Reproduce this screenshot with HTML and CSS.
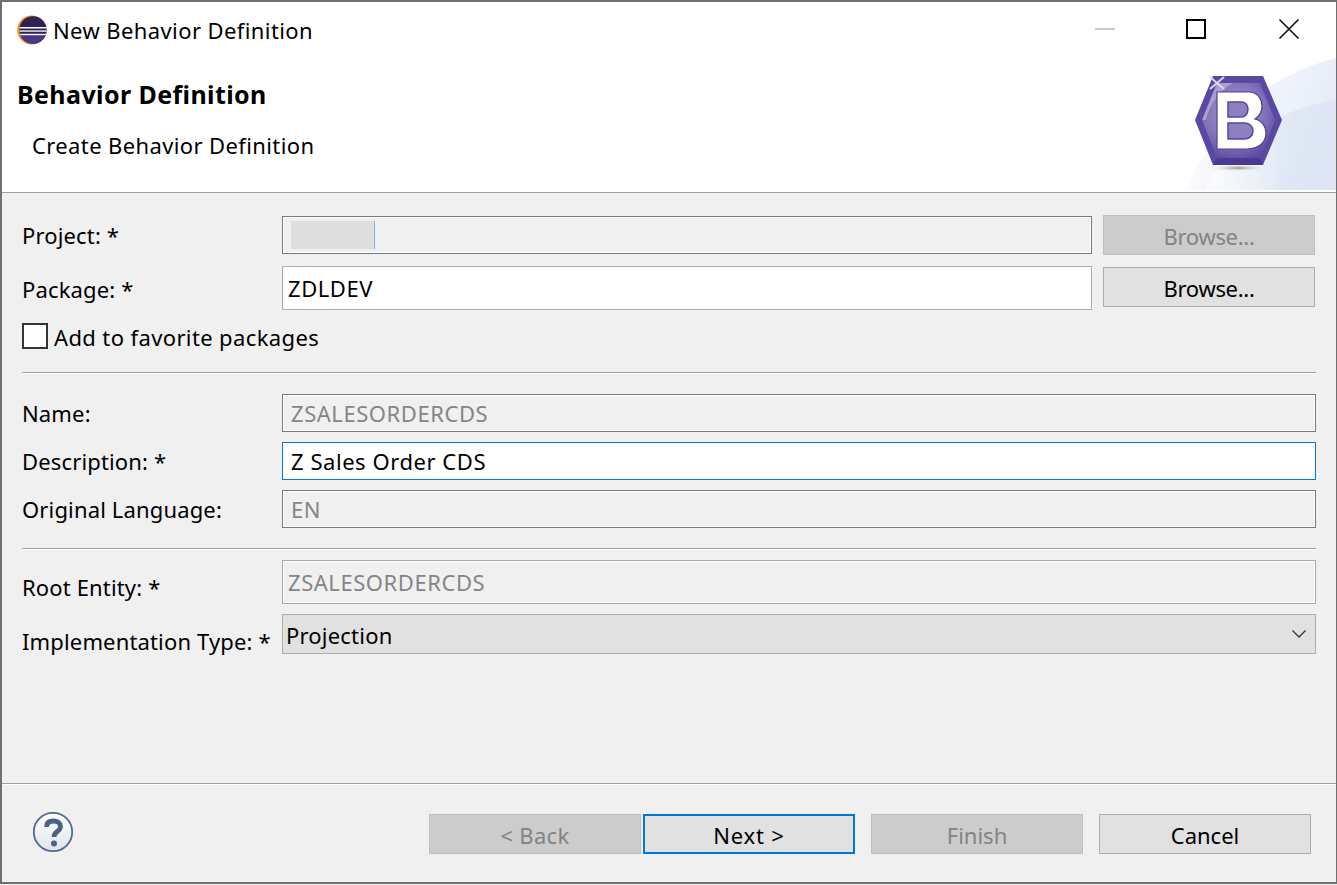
FILE: index.html
```html
<!DOCTYPE html>
<html lang="en">
<head>
    <meta charset="UTF-8">
    <meta name="viewport" content="width=device-width, initial-scale=1.0">
    <title>New Behavior Definition</title>
    <link rel="stylesheet" href="styles.css">
</head>
<body>
    <div class="window">
        <div class="titlebar">
            <svg class="app-icon" width="30" height="30" viewBox="0 0 30 30">
                <defs>
                    <clipPath id="disc"><circle cx="16" cy="15" r="13.7"/></clipPath>
                </defs>
                <circle cx="14.6" cy="15" r="14.4" fill="#f7941e"/>
                <circle cx="16" cy="15" r="13.7" fill="#2c2255"/>
                <g clip-path="url(#disc)">
                    <rect x="0" y="20" width="30" height="9" fill="#473788"/>
                    <rect x="0" y="12" width="30" height="1.500" fill="#fff"/>
                    <rect x="0" y="15.400" width="30" height="1.300" fill="#fff"/>
                    <rect x="0" y="18.800" width="30" height="1.400" fill="#fff"/>
                </g>
            </svg>
            <span class="window-title">New Behavior Definition</span>
            <div class="controls">
                <svg class="control control-min" width="22" height="22" viewBox="0 0 22 22"><path d="M1 11h20" stroke="#c8c8c8" stroke-width="2"/></svg>
                <svg class="control" width="22" height="22" viewBox="0 0 22 22"><rect x="2" y="2" width="18" height="18" fill="none" stroke="#000" stroke-width="2"/></svg>
                <svg class="control" width="22" height="22" viewBox="0 0 22 22"><path d="M1.500 1.500l19 19M20.500 1.500l-19 19" stroke="#111" stroke-width="1.600" fill="none"/></svg>
            </div>
        </div>

        <div class="banner">
            <div class="banner-text">
                <h1 class="banner-title">Behavior Definition</h1>
                <p class="banner-sub">Create Behavior Definition</p>
            </div>
            <svg class="banner-art" width="149" height="134" viewBox="0 0 149 134">
                <defs>
                    <linearGradient id="wash" x1="0" y1="0" x2="1" y2="0.3">
                        <stop offset="0" stop-color="#fff"/>
                        <stop offset="1" stop-color="#e6ecf8"/>
                    </linearGradient>
                    <linearGradient id="wash2" x1="0" y1="0" x2="1" y2="0">
                        <stop offset="0" stop-color="#fff"/>
                        <stop offset="0.65" stop-color="#dbe4f4"/>
                    </linearGradient>
                    <radialGradient id="gem" cx="0.45" cy="0.4" r="0.65">
                        <stop offset="0" stop-color="#a79ad0"/>
                        <stop offset="0.65" stop-color="#8171b8"/>
                        <stop offset="1" stop-color="#5b4aa0"/>
                    </radialGradient>
                    <radialGradient id="shade" cx="0.5" cy="0.5" r="0.5">
                        <stop offset="0" stop-color="#8d8d8d"/>
                        <stop offset="1" stop-color="#fff" stop-opacity="0"/>
                    </radialGradient>
                </defs>
                <path d="M0 134C22 76 70 22 149 2V134Z" fill="url(#wash)"/>
                <path d="M18 134C40 88 85 54 149 44V134Z" fill="url(#wash2)" opacity="0.7"/>
                <ellipse cx="51" cy="112" rx="30" ry="3.500" fill="url(#shade)"/>
                <path d="M26 20H76L95 64L76 109H26L8 64Z" fill="#5a48a3"/>
                <path d="M30 27H73L88 64L73 102H30L15 64Z" fill="url(#gem)"/>
                <path d="M30 102H73L76 109H26Z" fill="#4a3a92"/>
                <path d="M15 64L30 27H46C32 35 22 49 19 64Z" fill="#c8c2e2" opacity="0.55"/>
                <path d="M30 36H62C71 36 75 44 75 50C75 57 71 61 68 63C74 64 79 70 79 77C79 87 71 93 60 93H30Z" fill="#fff" stroke="#4f3f98" stroke-width="1.200"/>
                <path d="M41 46H55C59 46 61 50 61 53C61 58 58 61 54 61H41Z" fill="#8d7fc0" stroke="#5546a0" stroke-width="1.500"/>
                <path d="M41 67H58C63 67 66 71 66 75C66 80 62 83 57 83H41Z" fill="#8d7fc0" stroke="#5546a0" stroke-width="1.500"/>
                <path d="M23 21L37 33M37 21L23 33" stroke="#dcd8ea" stroke-width="2"/>
            </svg>
        </div>

        <div class="form">
            <div class="row row-project">
                <label class="label">Project: *</label>
                <div class="field field-readonly">
                    <span class="redacted"></span>
                </div>
                <button class="btn btn-browse" disabled>Browse...</button>
            </div>
            <div class="row row-package">
                <label class="label label-nudge">Package: *</label>
                <div class="field field-white field-tight">ZDLDEV</div>
                <button class="btn btn-browse btn-raised">Browse...</button>
            </div>
            <div class="check-row">
                <span class="checkbox"></span>
                <span class="check-text">Add to favorite packages</span>
            </div>
            <div class="separator sep-first"></div>
            <div class="row row-text">
                <label class="label">Name:</label>
                <div class="field field-readonly field-muted">ZSALESORDERCDS</div>
            </div>
            <div class="row row-text">
                <label class="label">Description: *</label>
                <div class="field field-focus">Z Sales Order CDS</div>
            </div>
            <div class="row row-text">
                <label class="label">Original Language:</label>
                <div class="field field-readonly field-muted">EN</div>
            </div>
            <div class="separator sep-second"></div>
            <div class="row row-root">
                <label class="label label-low">Root Entity: *</label>
                <div class="field field-pale field-muted field-tight">ZSALESORDERCDS</div>
            </div>
            <div class="row row-impl">
                <label class="label label-low">Implementation Type: *</label>
                <div class="combo">
                    <span class="combo-text">Projection</span>
                    <svg width="16" height="10" viewBox="0 0 16 10"><path d="M1.500 1.500L8 8l6.500-6.500" fill="none" stroke="#333" stroke-width="1.300"/></svg>
                </div>
            </div>
        </div>

        <div class="footer">
            <svg class="help" width="42" height="42" viewBox="0 0 42 42">
                <defs>
                    <linearGradient id="helpfill" x1="0" y1="0" x2="0" y2="1">
                        <stop offset="0" stop-color="#fff"/>
                        <stop offset="1" stop-color="#dfe3ea"/>
                    </linearGradient>
                </defs>
                <circle cx="21" cy="21" r="19.200" fill="url(#helpfill)" stroke="#4f6a8f" stroke-width="1.800"/>
                <path d="M14.500 16C14.500 11.500 17.500 10 21.500 10C25.500 10 28.500 12 28.500 15.500C28.500 20.500 22 20.500 22 26" fill="none" stroke="#4a6285" stroke-width="4.800"/>
                <circle cx="22" cy="32.500" r="3" fill="#4a6285"/>
            </svg>
            <div class="footer-buttons">
                <button class="btn btn-wizard btn-back" disabled>&lt; Back</button>
                <button class="btn btn-wizard btn-default">Next &gt;</button>
                <button class="btn btn-wizard btn-after" disabled>Finish</button>
                <button class="btn btn-wizard btn-after">Cancel</button>
            </div>
        </div>
    </div>
</body>
</html>
```
FILE: styles.css
```css
* {
    box-sizing: border-box;
}
body {
    margin: 0;
    padding: 0;
    background-color: #f0f0f0;
    color: #000;
    font-family: "Noto Sans", "Open Sans", sans-serif;
    font-size: 22px;
    line-height: 30px;
    overflow: hidden;
}
.window {
    width: 1337px;
    height: 884px;
    display: flex;
    flex-direction: column;
    background-color: #f0f0f0;
    border: 2px solid #707070;
    border-right-width: 1px;
}

/* title bar */
.titlebar {
    height: 55px;
    flex: none;
    display: flex;
    align-items: center;
    padding-left: 15px;
    background-color: #fff;
}
.window-title {
    margin-left: 6px;
    letter-spacing: 0.4px;
}
.controls {
    margin-left: auto;
    display: flex;
    gap: 71px;
    margin-right: 36px;
    margin-bottom: 2px;
}
.control-min {
    margin: 0 -2px 0 2px;
}

/* banner */
.banner {
    height: 136px;
    flex: none;
    display: flex;
    justify-content: space-between;
    align-items: flex-end;
    background-color: #fff;
    border-bottom: 1px solid #a0a0a0;
}
.banner-text {
    align-self: flex-start;
    padding-left: 15px;
}
.banner-title {
    margin: 20px 0 0;
    font-size: 25px;
    line-height: 34px;
    font-weight: 700;
    letter-spacing: 0.4px;
}
.banner-sub {
    margin: 19px 0 0 15px;
    letter-spacing: 0.38px;
}
.banner-art {
    flex: none;
    margin-bottom: 2px;
}

/* form */
.form {
    flex: 1;
    padding: 22px 20px 0;
}
.row {
    display: flex;
    align-items: center;
}
.label {
    width: 260px;
    flex: none;
    white-space: nowrap;
    letter-spacing: 0.15px;
}
.label-nudge {
    padding-top: 2px;
}
.field {
    flex: 1;
    height: 38px;
    display: flex;
    align-items: center;
    padding: 0 8px;
    border: 1px solid #7a7a7a;
    background-color: #f0f0f0;
    letter-spacing: 0.55px;
}
.row-project {
    height: 40px;
}
.row-package {
    height: 44px;
    margin-top: 11px;
}
.row-text {
    height: 38px;
    margin-top: 10px;
}
.row-text:first-of-type {
    margin-top: 0;
}
.row-root {
    height: 44px;
}
.row-impl {
    height: 40px;
    margin-top: 10px;
}
.label-low {
    padding-top: 14px;
}
.row-root .label-low {
    padding-top: 10px;
}
.row-package .field,
.row-root .field {
    height: 44px;
}
.field-readonly {
    box-shadow: inset 0 0 0 1px #fff;
}
.field-white {
    background-color: #fff;
    border-color: #adadad;
}
.field-tight {
    padding-left: 5px;
}
.field-focus {
    background-color: #fff;
    border-color: #0078d7;
}
.field-pale {
    border-color: #a8a8a8;
    box-shadow: inset 0 0 0 1px #fff;
}
.field-muted {
    color: #858585;
}
.redacted {
    width: 84px;
    height: 28px;
    background-color: #dedede;
    border-right: 1px solid #7fb4e6;
}
.btn {
    font-family: inherit;
    font-size: inherit;
    line-height: 30px;
    color: #000;
    background-color: #e1e1e1;
    border: 1px solid #adadad;
    padding: 2px 0 0;
    height: 40px;
}
.btn:disabled {
    background-color: #cccccc;
    border-color: #bfbfbf;
    color: #838383;
}
.btn-browse {
    width: 212px;
    flex: none;
    margin-left: 11px;
    margin-right: 1px;
    letter-spacing: -0.3px;
}
.btn-raised {
    margin-bottom: 2px;
}
.check-row {
    display: flex;
    align-items: center;
    gap: 6px;
    height: 26px;
    margin-top: 13px;
}
.check-text {
    padding-top: 2px;
    letter-spacing: 0.38px;
}
.checkbox {
    width: 26px;
    height: 26px;
    background-color: #fff;
    border: 2px solid #333;
}
.separator {
    border-top: 1px solid #a0a0a0;
    border-bottom: 1px solid #fff;
    height: 2px;
}
.sep-first {
    margin: 23px 0 20px;
}
.sep-second {
    margin: 20px 0 10px;
}
.combo {
    flex: 1;
    height: 40px;
    display: flex;
    align-items: center;
    justify-content: space-between;
    padding: 0 8px 0 3px;
    background-color: #e1e1e1;
    border: 1px solid #adadad;
}
.combo-text {
    padding-top: 2px;
    letter-spacing: 0.2px;
}

/* footer */
.footer {
    height: 99px;
    flex: none;
    display: flex;
    align-items: flex-start;
    justify-content: space-between;
    border-top: 1px solid #a0a0a0;
    box-shadow: inset 0 1px 0 #fff;
    padding: 30px 25px 0 30px;
}
.help {
    margin-top: -3px;
}
.footer-buttons {
    display: flex;
}
.btn-wizard {
    width: 212px;
}
.btn-back {
    letter-spacing: 0.3px;
}
.btn-default {
    margin-left: 2px;
    border: 2px solid #0078d7;
    letter-spacing: 0.8px;
}
.btn-after {
    margin-left: 16px;
}
```
